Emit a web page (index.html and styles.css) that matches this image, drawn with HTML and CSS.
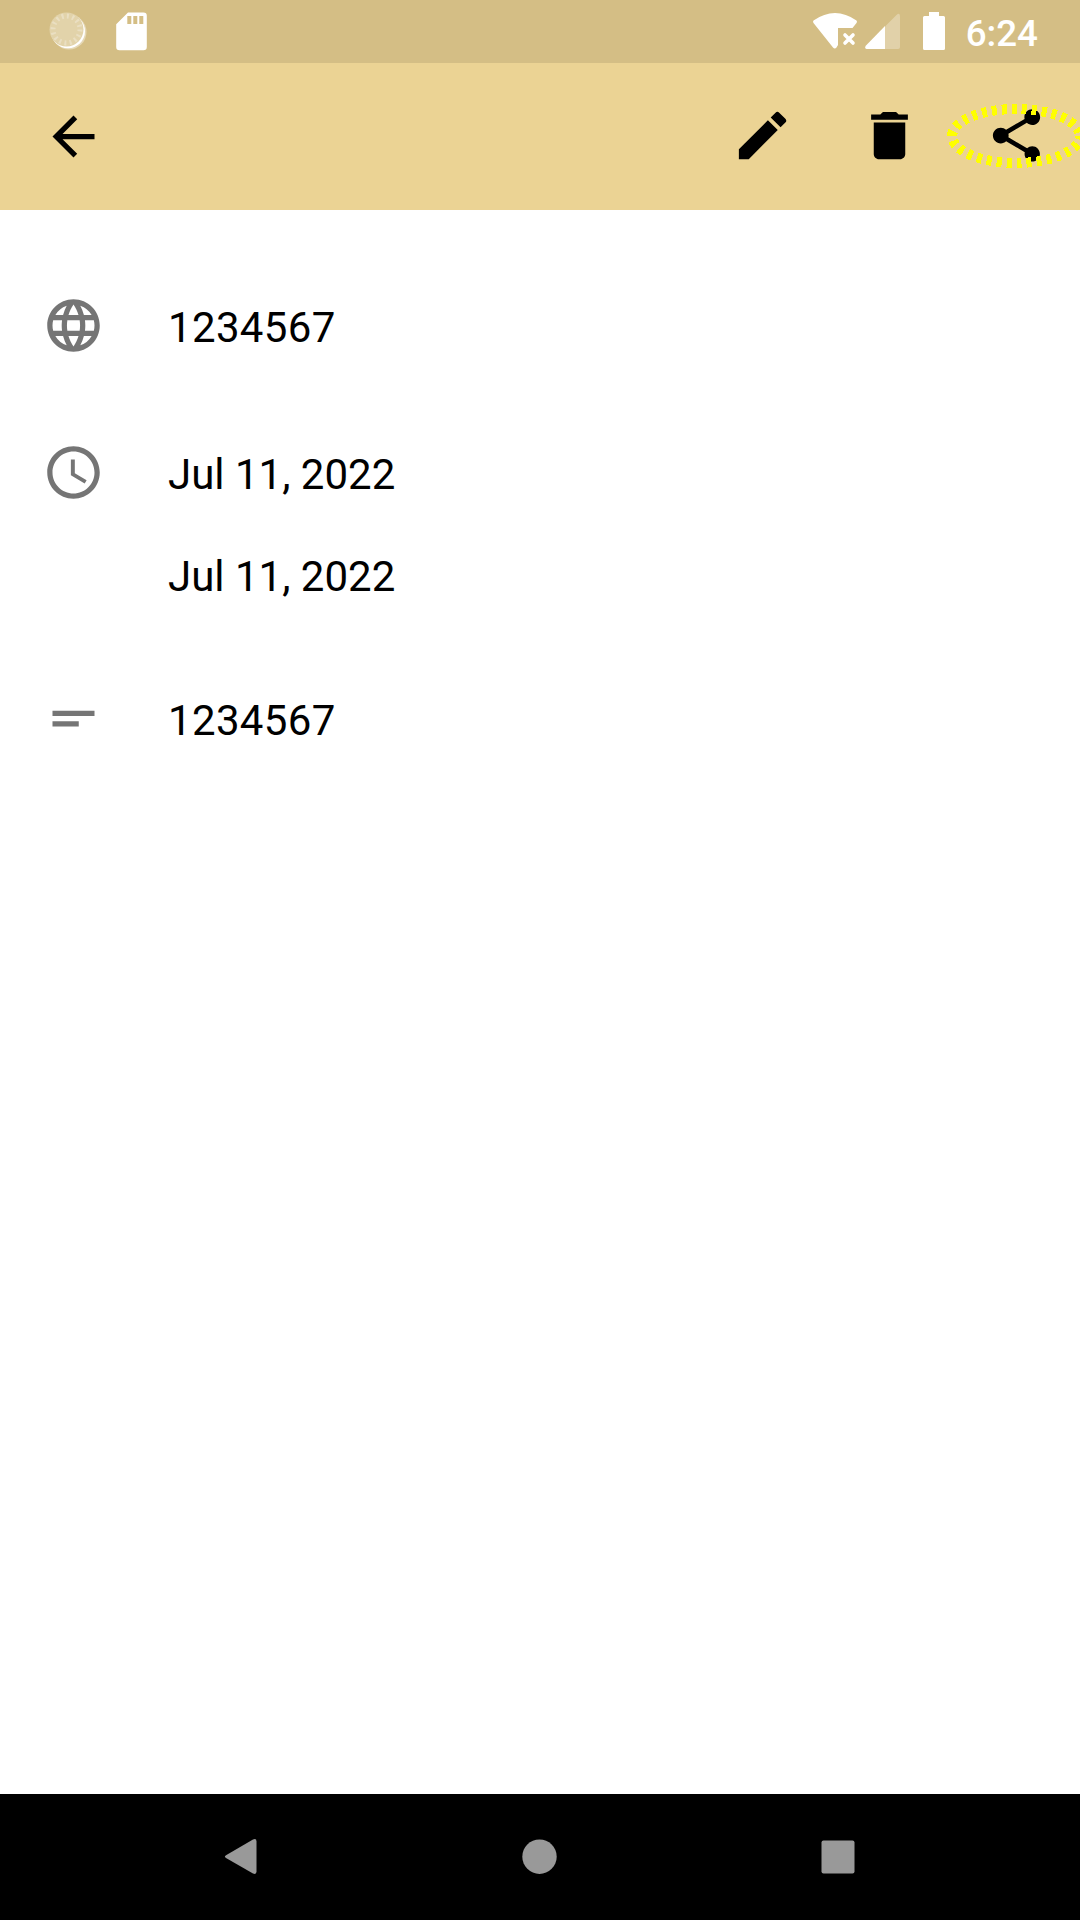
FILE: index.html
```html
<!DOCTYPE html>
<html lang="en">
<head>
<meta charset="utf-8">
<meta name="viewport" content="width=device-width">
<title>Event details</title>
<link rel="stylesheet" href="styles.css">
</head>
<body>
<div class="screen">
  <header class="status-bar">
    <svg class="status-left" viewBox="0 0 160 63" aria-hidden="true">
      <circle cx="69" cy="32" r="17.5" fill="#fff" opacity=".4"/>
      <circle cx="68" cy="31.200" r="17" fill="#fff"/>
      <circle cx="66.500" cy="29.500" r="17" fill="#e2d3aa"/>
      <circle cx="66.500" cy="29.500" r="13.500" fill="none" stroke="#eadfc2" stroke-width="5" stroke-dasharray="2 3.301"/>
      <path fill="#fff" fill-rule="evenodd" d="M128 12.500h15.500a3.300 3.300 0 0 1 3.300 3.300V47a3.300 3.300 0 0 1-3.300 3.300h-24a3.300 3.300 0 0 1-3.300-3.300V24.300zM127.300 16v8h4v-8zm6 0v8h4v-8zm6 0v8h4v-8z"/>
    </svg>
    <svg class="status-right" viewBox="800 0 156 63" aria-hidden="true">
      <path fill="#fff" d="M813.500 20.500Q835 5.500 856.500 20.500Q857.500 21.500 856.500 23L852.500 28H838V45L836.500 47.500Q834.800 49.500 833 47.500L813.500 23Q812.500 21.500 813.500 20.500z"/>
      <path stroke="#fff" stroke-width="3.600" stroke-linecap="round" d="m845 35 8 8m0-8-8 8"/>
      <path fill="#fff" opacity=".3" d="M885 26.500 896.500 15Q900 12 900 16.500V47a2 2 0 0 1-2 2h-13z"/>
      <path fill="#fff" d="M885 26V49h-18.500Q864 48 866 45.500z"/>
      <path fill="#fff" d="M929 12h10v4h4.500a1.500 1.500 0 0 1 1.500 1.500v31a1.500 1.500 0 0 1-1.500 1.500h-19a1.500 1.500 0 0 1-1.500-1.500v-31a1.500 1.500 0 0 1 1.500-1.500h4.500z"/>
    </svg>
    <time class="clock">6:24</time>
  </header>

  <nav class="toolbar">
    <svg class="icon back" viewBox="0 0 24 24" role="img" aria-label="Back"><path d="M20 11H7.830l5.590-5.590L12 4l-8 8 8 8 1.410-1.410L7.830 13H20v-2z"/></svg>
    <div class="actions">
      <svg class="icon" viewBox="0 0 24 24" role="img" aria-label="Edit"><path d="M3 17.250V21h3.750L17.810 9.940l-3.750-3.750L3 17.250zM20.710 7.040a1 1 0 0 0 0-1.410l-2.340-2.340a1 1 0 0 0-1.410 0l-1.830 1.830 3.750 3.750 1.830-1.830z"/></svg>
      <svg class="icon" viewBox="0 0 24 24" role="img" aria-label="Delete"><path d="M6 19c0 1.100.9 2 2 2h8c1.100 0 2-.9 2-2V7H6v12zM19 4h-3.500l-1-1h-5l-1 1H5v2h14V4z"/></svg>
      <div class="share">
        <svg class="icon" viewBox="0 0 24 24" role="img" aria-label="Share"><path d="M18 16.080c-.76 0-1.440.3-1.960.77L8.910 12.700c.05-.23.09-.46.09-.7s-.04-.47-.09-.7l7.050-4.110c.54.5 1.250.81 2.040.81 1.660 0 3-1.340 3-3s-1.340-3-3-3-3 1.340-3 3c0 .24.040.47.090.7L8.040 9.810C7.500 9.310 6.790 9 6 9c-1.660 0-3 1.340-3 3s1.340 3 3 3c.79 0 1.500-.31 2.040-.81l7.120 4.160c-.05.21-.08.43-.08.65 0 1.610 1.310 2.920 2.920 2.920s2.920-1.310 2.920-2.920-1.310-2.920-2.920-2.920z"/></svg>
        <svg class="highlight" viewBox="0 0 140 66" aria-hidden="true"><ellipse cx="71" cy="33" rx="64" ry="27"/></svg>
      </div>
    </div>
  </nav>

  <main class="details">
    <section class="row">
      <svg class="icon muted" viewBox="0 0 24 24" aria-hidden="true"><path d="M11.990 2C6.470 2 2 6.480 2 12s4.470 10 9.990 10C17.520 22 22 17.520 22 12S17.520 2 11.990 2zm6.930 6h-2.950a15.650 15.650 0 0 0-1.380-3.560A8.030 8.030 0 0 1 18.920 8zM12 4.040c.83 1.200 1.480 2.530 1.910 3.960h-3.820c.43-1.430 1.080-2.760 1.910-3.960zM4.260 14C4.100 13.360 4 12.690 4 12s.1-1.360.26-2h3.380c-.08.66-.14 1.320-.14 2s.06 1.340.14 2H4.260zm.82 2h2.950c.32 1.250.78 2.450 1.380 3.560A7.990 7.990 0 0 1 5.080 16zm2.950-8H5.080a7.990 7.990 0 0 1 4.330-3.560A15.650 15.650 0 0 0 8.030 8zM12 19.960c-.83-1.200-1.480-2.530-1.910-3.960h3.820c-.43 1.430-1.080 2.760-1.910 3.960zM14.340 14H9.660c-.09-.66-.16-1.320-.16-2s.07-1.350.16-2h4.680c.09.65.16 1.320.16 2s-.07 1.340-.16 2zm.25 5.560c.6-1.110 1.060-2.310 1.380-3.560h2.950a8.030 8.030 0 0 1-4.330 3.560zM16.360 14c.08-.66.14-1.320.14-2s-.06-1.340-.14-2h3.380c.16.64.26 1.310.26 2s-.1 1.360-.26 2h-3.380z"/></svg>
      <div class="values"><p class="number">1234567</p></div>
    </section>
    <section class="row dates">
      <svg class="icon muted" viewBox="0 0 24 24" aria-hidden="true"><path d="M11.990 2C6.470 2 2 6.480 2 12s4.470 10 9.990 10C17.520 22 22 17.520 22 12S17.520 2 11.990 2zM12 20c-4.420 0-8-3.580-8-8s3.580-8 8-8 8 3.580 8 8-3.580 8-8 8zM12.500 7H11v6l5.250 3.150.75-1.230-4.500-2.670z"/></svg>
      <div class="values"><p>Jul 11, 2022</p><p>Jul 11, 2022</p></div>
    </section>
    <section class="row">
      <svg class="icon muted" viewBox="0 0 24 24" aria-hidden="true"><path d="M4 9h16v2H4zm0 4h10v2H4z"/></svg>
      <div class="values"><p class="number">1234567</p></div>
    </section>
  </main>

  <footer class="nav-bar">
    <svg viewBox="0 0 48 48" role="img" aria-label="Back"><path d="M9 22.200 36 6.500Q39.500 5 39.500 8.500V38.500Q39.500 42 36 40.500L9 25Q6.800 23.600 9 22.200z"/></svg>
    <svg viewBox="0 0 48 48" role="img" aria-label="Home"><circle cx="23.500" cy="23.700" r="17.200"/></svg>
    <svg viewBox="0 0 48 48" role="img" aria-label="Overview"><rect x="7.500" y="7.500" width="33" height="33" rx="2"/></svg>
  </footer>
</div>
</body>
</html>
```
FILE: styles.css
```css
* {
  box-sizing: border-box;
}

body {
  margin: 0;
  font-family: Roboto, sans-serif;
  color: #000;
  background: #fff;
}

svg {
  display: block;
  flex: none;
}

.screen {
  display: flex;
  flex-direction: column;
  width: 1080px;
  height: 1920px;
  overflow: hidden;
}

.status-bar {
  display: flex;
  height: 63px;
  padding-right: 42px;
  background: #d4be85;
}

.status-left {
  width: 160px;
  height: 63px;
  margin-right: auto;
}

.status-right {
  width: 156px;
  height: 63px;
}

.clock {
  width: 82px;
  color: #fff;
  font-size: 36.75px;
  font-weight: 500;
  line-height: 67px;
  text-align: right;
}

.toolbar {
  display: flex;
  justify-content: space-between;
  height: 147px;
  padding: 41px 32px 0 42px;
  background: #ebd394;
}

.icon {
  width: 63px;
  height: 63px;
}

.back {
  margin-top: 1px;
}

.actions {
  display: flex;
  gap: 64px;
}

.share {
  position: relative;
}

.highlight {
  position: absolute;
  top: -1px;
  left: -40px;
  width: 140px;
  height: 66px;
  fill: none;
  stroke: #ff0;
  stroke-width: 10px;
  stroke-dasharray: 5 5;
  stroke-dashoffset: 1.3px;
  shape-rendering: crispEdges;
}

.details {
  flex: 1;
  padding: 84px 42px;
}

.row {
  display: flex;
  gap: 63px;
  margin-bottom: 84px;
}

.dates {
  margin-bottom: 81px;
}

.muted {
  fill: #757575;
}

.values {
  display: flex;
  flex-direction: column;
  gap: 39px;
}

.row .values {
  padding-top: 2px;
  margin-bottom: -2px;
}

.values p {
  margin: 0;
  font-size: 42px;
  line-height: 63px;
}

.values .number {
  letter-spacing: 0.35px;
}

.nav-bar {
  display: flex;
  justify-content: space-between;
  height: 126px;
  padding: 39px 218px 0 217px;
  background: #000;
}

.nav-bar svg {
  width: 48px;
  height: 48px;
  fill: #999;
}
```
